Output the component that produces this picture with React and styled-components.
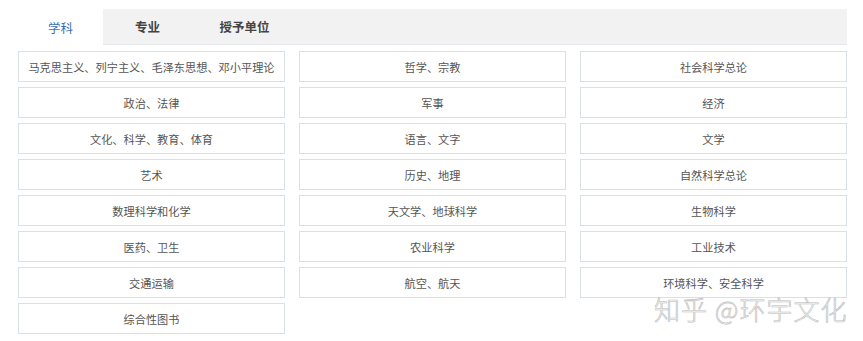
import React, { useState } from 'react';
import styled, { createGlobalStyle } from 'styled-components';

const GlobalStyle = createGlobalStyle`
    html, body {
        margin: 0;
        padding: 0;
        background: #ffffff;
    }
    body {
        font-family: "Noto Sans CJK SC", "Noto Sans", sans-serif;
    }
`;

const tabs = [
    { label: '学科', width: 85 },
    { label: '专业', width: 89 },
    { label: '授予单位', width: 105 },
];

const subjects = [
    '马克思主义、列宁主义、毛泽东思想、邓小平理论',
    '哲学、宗教',
    '社会科学总论',
    '政治、法律',
    '军事',
    '经济',
    '文化、科学、教育、体育',
    '语言、文字',
    '文学',
    '艺术',
    '历史、地理',
    '自然科学总论',
    '数理科学和化学',
    '天文学、地球科学',
    '生物科学',
    '医药、卫生',
    '农业科学',
    '工业技术',
    '交通运输',
    '航空、航天',
    '环境科学、安全科学',
    '综合性图书',
];

export default function App(){
    const [active, setActive] = useState(0);
    return <Container>
        <GlobalStyle />
        <TabBar>
            {tabs.map((t, i) => (
                <Tab key={t.label} $w={t.width} $active={i === active} onClick={() => setActive(i)}>
                    {t.label}
                </Tab>
            ))}
        </TabBar>
        <Grid>
            {subjects.map(s => <Cell key={s}>{s}</Cell>)}
        </Grid>
        <Watermark>知乎 @环宇文化</Watermark>
    </Container>;
}

const Container = styled.div`
    position: relative;
    width: 863px;
    height: 341px;
    padding: 9px 16px 0 18px;
    box-sizing: border-box;
    overflow: hidden;
`;

const TabBar = styled.div`
    display: flex;
    height: 35px;
    background: #f2f2f2;
    border-bottom: 1px solid #e3e6ea;
`;

const Tab = styled.div`
    width: ${p => p.$w}px;
    display: flex;
    align-items: center;
    justify-content: center;
    font-size: 12.5px;
    font-weight: ${p => (p.$active ? 400 : 700)};
    color: ${p => (p.$active ? '#3b6fb6' : '#444')};
    background: ${p => (p.$active ? '#ffffff' : 'transparent')};
    margin-bottom: ${p => (p.$active ? '-1px' : '0')};
    cursor: pointer;
`;

const Grid = styled.div`
    display: grid;
    grid-template-columns: repeat(3, 1fr);
    column-gap: 14px;
    row-gap: 5px;
    margin-top: 6px;
`;

const Cell = styled.div`
    height: 29px;
    border: 1px solid #d9e0e8;
    display: flex;
    align-items: center;
    justify-content: center;
    font-size: 11.2px;
    color: #555;
    white-space: nowrap;
`;

const Watermark = styled.div`
    position: absolute;
    left: 654px;
    top: 290px;
    font-size: 26px;
    font-weight: 300;
    letter-spacing: 1px;
    color: #f6f6f6;
    -webkit-text-stroke: 0.6px #bcbcbc;
    white-space: nowrap;
    pointer-events: none;
`;
